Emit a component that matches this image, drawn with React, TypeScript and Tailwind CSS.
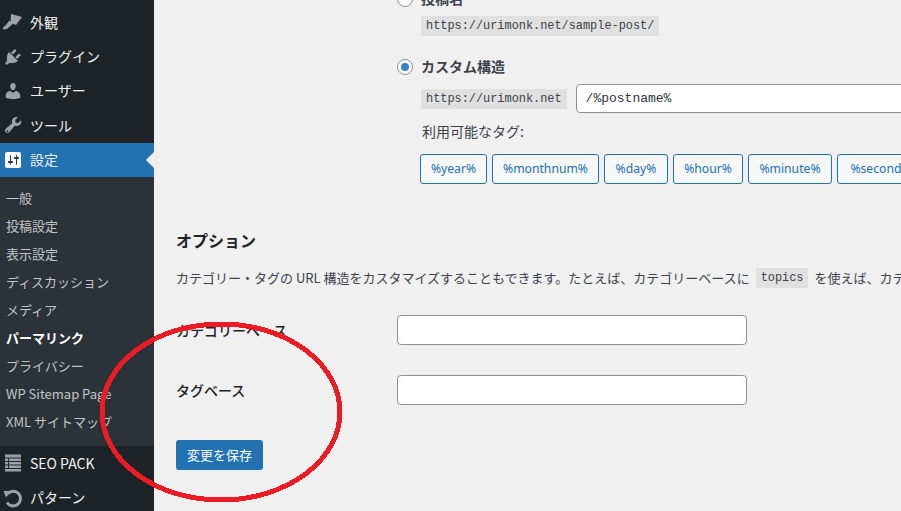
const jp = "font-['Meiryo','Noto_Sans_CJK_JP','Noto_Sans',sans-serif]";

function Brush() {
  return (
    <svg viewBox="0 0 20 20" className="h-5 w-5" fill="#9ca2a7">
      <path d="M8 2l11 3-6 8-4-1.500-1.500-1.500zM6.500 8.500l3 3.500-5.500 5-4 .5-.5-1.500 3-2.500z" />
    </svg>
  );
}

function Plug() {
  return (
    <svg viewBox="0 0 20 20" className="h-5 w-5" fill="#9ca2a7">
      <path d="M13.11 4.36L9.87 7.6 8 5.73l3.24-3.24c.35-.34 1.05-.2 1.56.32.52.51.66 1.21.31 1.55zm-8 1.77l.91-1.12 9.01 9.01-1.19.84c-.71.71-2.63 1.16-3.82 1.16H6.14L4.9 17.26c-.59.59-1.54.59-2.12 0-.59-.58-.59-1.53 0-2.12l1.24-1.24v-3.88c0-1.13.4-3.05 1.09-3.89zm7.26 3.97l3.24-3.24c.34-.35 1.04-.21 1.55.31.52.51.66 1.21.31 1.55l-3.24 3.25z" />
    </svg>
  );
}

function UserIcon() {
  return (
    <svg viewBox="0 0 20 20" className="h-5 w-5" fill="#9ca2a7">
      <path d="M10 9.25c-2.27 0-2.73-3.44-2.73-3.44C7 4.02 7.82 2 9.97 2c2.16 0 2.98 2.02 2.71 3.81 0 0-.41 3.44-2.68 3.44zm0 2.57L12.72 10c2.39 0 4.52 2.33 4.52 4.53v2.49s-3.65 1.13-7.24 1.13c-3.65 0-7.24-1.13-7.24-1.13v-2.49c0-2.25 1.94-4.48 4.47-4.48z" />
    </svg>
  );
}

function Wrench() {
  return (
    <svg viewBox="0 0 20 20" className="h-5 w-5" fill="#9ca2a7" fillRule="evenodd">
      <path d="M16.68 9.77c-1.34 1.34-3.3 1.67-4.95.99l-5.41 6.52c-.99.99-2.59.99-3.57 0s-.99-2.59 0-3.57l6.52-5.42c-.68-1.65-.35-3.61.99-4.95 1.28-1.28 3.12-1.64 4.72-1.1l-2.81 2.81.35 2.69 2.69.35 2.81-2.81c.54 1.6.18 3.44-1.1 4.72zM3.81 16.85c.39.39 1.02.39 1.41 0 .39-.39.39-1.02 0-1.41-.39-.39-1.02-.39-1.41 0-.39.39-.39 1.02 0 1.41z" />
    </svg>
  );
}

function Sliders() {
  return (
    <svg viewBox="0 0 20 20" className="h-5 w-5">
      <rect x="3" y="3" width="14" height="14" fill="#1d3a55" />
      <path
        fill="#fff"
        fillRule="evenodd"
        d="M18 16V4c0-1.100-.9-2-2-2H4c-1.100 0-2 .9-2 2v12c0 1.100.9 2 2 2h12c1.100 0 2-.9 2-2zM8 11h1c.55 0 1 .45 1 1s-.45 1-1 1H8v1.500c0 .28-.22.5-.5.5s-.5-.22-.5-.5V13H6c-.55 0-1-.45-1-1s.45-1 1-1h1V5.500c0-.28.22-.5.5-.5s.5.22.5.5V11zm5-2h-1c-.55 0-1-.45-1-1s.45-1 1-1h1V5.500c0-.28.22-.5.5-.5s.5.22.5.5V7h1c.55 0 1 .45 1 1s-.45 1-1 1h-1v5.500c0 .28-.22.5-.5.5s-.5-.22-.5-.5V9z"
      />
    </svg>
  );
}

function ListIcon() {
  return (
    <svg viewBox="0 0 20 20" className="h-5 w-5" fill="#9ca2a7">
      <path d="M2 1.500h16v3H2zM2 5.500h3v2.500H2zM6 5.500h12v2.500H6zM2 9h3v2.500H2zM6 9h12v2.500H6zM2 12.500h3V15H2zM6 12.500h12V15H6zM2 16h16v2.500H2z" />
    </svg>
  );
}

function Undo() {
  return (
    <svg viewBox="0 0 20 20" className="h-5 w-5" fill="none" stroke="#9ca2a7" strokeWidth="3">
      <path d="M4 14.500A7.300 7.300 0 1 0 5 5.500" />
      <path d="M.5 3h8l-5.500 6.500Z" fill="#9ca2a7" stroke="none" />
    </svg>
  );
}

function MenuRow({ icon, label, active }: { icon: React.ReactNode; label: string; active?: boolean }) {
  return (
    <div className={`relative flex h-[34.4px] items-center ${active ? "bg-[#2271b1]" : ""}`}>
      <span className="flex w-[30px] pl-[3px]">{icon}</span>
      <span className="text-[14px] text-[#f0f0f1]">{label}</span>
      {active && (
        <span className="absolute right-0 top-[9px] border-y-[8px] border-r-[8px] border-y-transparent border-r-[#f0f0f1]" />
      )}
    </div>
  );
}

const subItems = [
  "一般",
  "投稿設定",
  "表示設定",
  "ディスカッション",
  "メディア",
  "パーマリンク",
  "プライバシー",
  "WP Sitemap Page",
  "XML サイトマップ",
];

const tags = [
  { label: "%year%", width: "w-[67px]" },
  { label: "%monthnum%", width: "w-[107px]" },
  { label: "%day%", width: "w-[64px]" },
  { label: "%hour%", width: "w-[70px]" },
  { label: "%minute%", width: "w-[84px]" },
  { label: "%second%", width: "w-[88px]" },
];

function Code({ children }: { children: string }) {
  return (
    <code className="block h-5 w-fit whitespace-nowrap bg-[#e0e0e0] px-[5px] font-['Liberation_Mono',monospace] text-[11.9px] leading-5 text-[#3c434a]">
      {children}
    </code>
  );
}

function Radio({ checked }: { checked?: boolean }) {
  return (
    <span className="flex h-4 w-4 shrink-0 items-center justify-center rounded-full border border-[#8c8f94] bg-white">
      {checked && <span className="h-2 w-2 rounded-full bg-[#3582c4]" />}
    </span>
  );
}

export default function App() {
  return (
    <div className={`relative flex h-[511px] w-[901px] overflow-hidden bg-[#f0f0f1] ${jp}`}>
      <aside className="h-[511px] w-[154px] shrink-0 overflow-hidden bg-[#1d2327] pt-[5px]">
        <MenuRow icon={<Brush />} label="外観" />
        <MenuRow icon={<Plug />} label="プラグイン" />
        <MenuRow icon={<UserIcon />} label="ユーザー" />
        <MenuRow icon={<Wrench />} label="ツール" />
        <MenuRow icon={<Sliders />} label="設定" active />
        <ul className="h-[269px] bg-[#2c3338] pt-[7px]">
          {subItems.map((item) => (
            <li
              key={item}
              className={`flex h-[28px] items-center whitespace-nowrap pl-[6px] text-[13px] ${
                item === "パーマリンク" ? "font-bold text-white" : "text-[#c3c4c7]"
              }`}
            >
              {item}
            </li>
          ))}
        </ul>
        <MenuRow icon={<ListIcon />} label="SEO PACK" />
        <MenuRow icon={<Undo />} label="パターン" />
      </aside>

      <main className="min-w-0 flex-1 overflow-hidden pl-[22px] text-[#3c434a]">
        <div className="-mt-[11px] pl-[221px]">
          <div className="flex h-5 items-center gap-2">
            <Radio />
            <span className="pb-[2px] text-[14px] font-semibold">投稿名</span>
          </div>
          <div className="mt-[7px] pl-6">
            <Code>https://urimonk.net/sample-post/</Code>
          </div>
          <div className="mt-[21px] flex h-5 items-center gap-2">
            <Radio checked />
            <span className="pb-[2px] text-[14px] font-semibold">カスタム構造</span>
          </div>
          <div className="mt-[7px] flex items-center gap-[9px] pl-6">
            <Code>https://urimonk.net</Code>
            <div className="flex h-[29px] w-[400px] shrink-0 items-center rounded-[4px] border border-[#8c8f94] bg-white px-[9px] font-['Liberation_Mono',monospace] text-[13px] text-[#2c3338]">
              /%postname%
            </div>
          </div>
          <p className="mt-[8px] pl-[25px] text-[14px] leading-5">利用可能なタグ:</p>
          <div className="mt-[13px] flex gap-[5px] pl-[23px]">
            {tags.map((tag) => (
              <span
                key={tag.label}
                className={`flex h-[30px] shrink-0 items-center justify-center whitespace-nowrap rounded-[3px] border border-[#2271b1] bg-[#f6f7f7] font-['Noto_Sans',sans-serif] text-[12.2px] text-[#2271b1] ${tag.width}`}
              >
                {tag.label}
              </span>
            ))}
          </div>
        </div>

        <h2 className="mt-[46px] text-[16px] font-bold leading-5 text-[#1d2327]">オプション</h2>
        <p className="mt-[18px] flex h-5 items-center whitespace-nowrap text-[13px]">
          カテゴリー・タグの URL 構造をカスタマイズすることもできます。たとえば、カテゴリーベースに
          <code className="mx-[6px] inline-block h-5 bg-[#e0e0e0] px-[5px] font-['Liberation_Mono',monospace] text-[11.9px] leading-5">
            topics
          </code>
          を使えば、カテゴリーのリンクを変更できます。
        </p>

        <div className="mt-[27px] flex h-[30px] items-center">
          <label className="w-[221px] text-[14px] font-medium text-[#1d2327]">カテゴリーベース</label>
          <div className="h-[30px] w-[350px] rounded-[4px] border border-[#8c8f94] bg-white" />
        </div>
        <div className="mt-[30px] flex h-[30px] items-center">
          <label className="w-[221px] text-[14px] font-medium text-[#1d2327]">タグベース</label>
          <div className="h-[30px] w-[350px] rounded-[4px] border border-[#8c8f94] bg-white" />
        </div>
        <button className="mt-[35px] flex h-[30px] w-[87px] items-center justify-center rounded-[3px] bg-[#2271b1] text-[13px] text-white">
          変更を保存
        </button>
      </main>

      {/* hand drawn red circle */}
      <svg className="pointer-events-none absolute left-0 top-0 h-[511px] w-[901px]" viewBox="0 0 901 511" fill="none">
        <ellipse cx="221" cy="412" rx="119" ry="88" stroke="#ed1c24" strokeWidth="5" shapeRendering="crispEdges" />
      </svg>
    </div>
  );
}
